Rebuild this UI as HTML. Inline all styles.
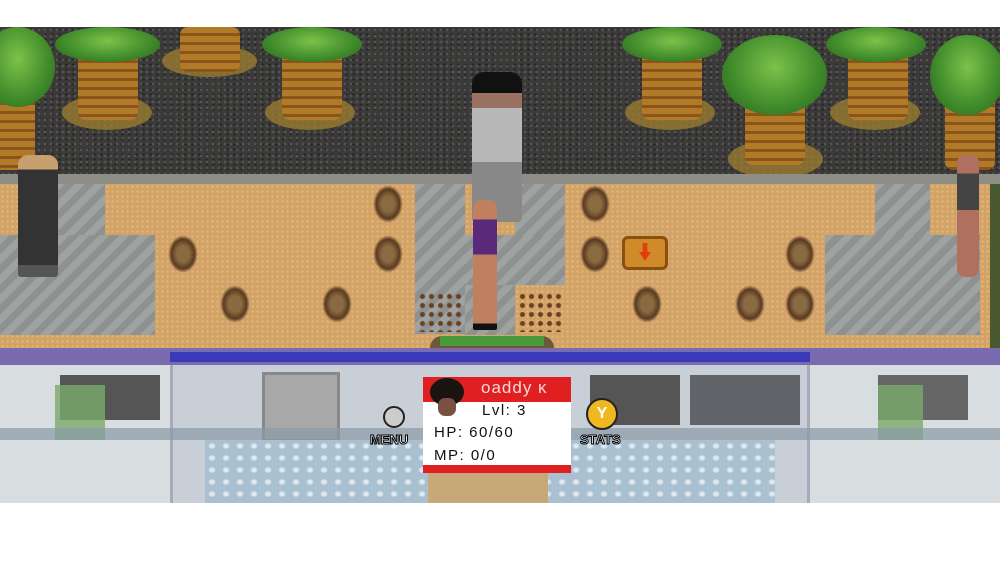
<!DOCTYPE html>
<html><head><style>
*{margin:0;padding:0;box-sizing:border-box}
body{width:1000px;height:562px;background:#fff;position:relative;overflow:hidden;font-family:"Liberation Sans",sans-serif}
.a{position:absolute}
.gravel{background:#3b3a39;background-image:radial-gradient(#555 1px,transparent 1.5px),radial-gradient(#222 1px,transparent 1.5px);background-size:6px 6px,7px 5px}
.sand{background:#d2a266;background-image:radial-gradient(#e0b67a 1px,transparent 1.5px);background-size:5px 5px}
.stone{background:#8d9290;background-image:linear-gradient(135deg,rgba(255,255,255,.15) 25%,transparent 25%,transparent 50%,rgba(255,255,255,.15) 50%,rgba(255,255,255,.15) 75%,transparent 75%);background-size:20px 20px}
.trunk{background:repeating-linear-gradient(#b27a28 0 6px,#8a5518 6px 9px);border-radius:8px}
.leaf{background:radial-gradient(ellipse at 50% 40%,#7cc24a,#3f8a2a 60%,#2c5f1e);border-radius:50%}
.base{background:#9a7a30;border-radius:50%;opacity:.8}
.plant{width:30px;height:38px;background:radial-gradient(ellipse,#8a6a40 30%,#5a3a22 55%,transparent 70%)}
</style></head><body>
<div class="a gravel" style="left:0;top:27px;width:1000px;height:151px"></div>
<!-- palms -->
<div class="a base" style="left:62px;top:95px;width:90px;height:35px"></div>
<div class="a trunk" style="left:78px;top:45px;width:60px;height:75px"></div>
<div class="a leaf" style="left:55px;top:27px;width:105px;height:35px"></div>
<div class="a base" style="left:162px;top:45px;width:95px;height:32px"></div>
<div class="a trunk" style="left:180px;top:27px;width:60px;height:45px"></div>
<div class="a base" style="left:265px;top:95px;width:90px;height:35px"></div>
<div class="a trunk" style="left:282px;top:45px;width:60px;height:75px"></div>
<div class="a leaf" style="left:262px;top:27px;width:100px;height:35px"></div>
<div class="a trunk" style="left:-10px;top:60px;width:45px;height:110px"></div>
<div class="a leaf" style="left:-20px;top:27px;width:75px;height:80px"></div>
<div class="a base" style="left:625px;top:95px;width:90px;height:35px"></div>
<div class="a trunk" style="left:642px;top:45px;width:60px;height:75px"></div>
<div class="a leaf" style="left:622px;top:27px;width:100px;height:35px"></div>
<div class="a base" style="left:728px;top:140px;width:95px;height:38px"></div>
<div class="a trunk" style="left:745px;top:80px;width:60px;height:85px"></div>
<div class="a leaf" style="left:722px;top:35px;width:105px;height:80px"></div>
<div class="a base" style="left:830px;top:95px;width:90px;height:35px"></div>
<div class="a trunk" style="left:848px;top:45px;width:60px;height:75px"></div>
<div class="a leaf" style="left:826px;top:27px;width:100px;height:35px"></div>
<div class="a trunk" style="left:945px;top:80px;width:50px;height:90px"></div>
<div class="a leaf" style="left:930px;top:35px;width:75px;height:80px"></div>
<!-- ledge -->
<div class="a" style="left:0;top:174px;width:1000px;height:10px;background:#8f8e86"></div>
<div class="a sand" style="left:0;top:184px;width:1000px;height:164px"></div>
<!-- stones -->
<div class="a stone" style="left:55px;top:184px;width:50px;height:52px"></div>
<div class="a stone" style="left:0;top:235px;width:155px;height:100px"></div>
<div class="a stone" style="left:415px;top:184px;width:50px;height:150px"></div>
<div class="a stone" style="left:465px;top:235px;width:100px;height:50px"></div>
<div class="a stone" style="left:465px;top:285px;width:50px;height:50px"></div>
<div class="a stone" style="left:515px;top:184px;width:50px;height:52px"></div>
<div class="a stone" style="left:875px;top:184px;width:55px;height:52px"></div>
<div class="a stone" style="left:825px;top:235px;width:155px;height:100px"></div>
<!-- plants -->
<div class="a plant" style="left:373px;top:185px"></div>
<div class="a plant" style="left:373px;top:235px"></div>
<div class="a plant" style="left:168px;top:235px"></div>
<div class="a plant" style="left:220px;top:285px"></div>
<div class="a plant" style="left:322px;top:285px"></div>
<div class="a plant" style="left:580px;top:185px"></div>
<div class="a plant" style="left:580px;top:235px"></div>
<div class="a plant" style="left:632px;top:285px"></div>
<div class="a plant" style="left:735px;top:285px"></div>
<div class="a plant" style="left:785px;top:235px"></div>
<div class="a plant" style="left:785px;top:285px"></div>
<div class="a" style="left:418px;top:292px;width:45px;height:40px;background:radial-gradient(#6a4020 2px,transparent 3px);background-size:9px 9px"></div>
<div class="a" style="left:518px;top:292px;width:45px;height:40px;background:radial-gradient(#6a4020 2px,transparent 3px);background-size:9px 9px"></div>
<!-- sign -->
<div class="a" style="left:622px;top:236px;width:46px;height:34px;background:#d08a2a;border:3px solid #8a5010;border-radius:6px"></div>
<div class="a" style="left:639px;top:243px;width:12px;height:18px;background:#e04010;clip-path:polygon(30% 0,70% 0,70% 50%,100% 50%,50% 100%,0 50%,30% 50%)"></div>
<!-- characters -->
<div class="a" style="left:472px;top:72px;width:50px;height:150px;background:linear-gradient(#111 0 14%,#9a7060 14% 24%,#b8b8b8 24% 60%,#888 60% 100%);border-radius:12px 12px 4px 4px"></div>
<div class="a" style="left:473px;top:200px;width:24px;height:130px;background:linear-gradient(#c08060 0 15%,#5a2a7a 15% 42%,#c08060 42% 95%,#111 95%);border-radius:8px 8px 2px 2px"></div>
<div class="a" style="left:18px;top:155px;width:40px;height:122px;background:linear-gradient(#c8a070 0 12%,#333 12% 90%,#555 90%);border-radius:10px 10px 3px 3px"></div>
<div class="a" style="left:957px;top:155px;width:22px;height:122px;background:linear-gradient(#b07060 0 15%,#444 15% 45%,#b07060 45%);border-radius:8px"></div>
<div class="a" style="left:990px;top:184px;width:10px;height:164px;background:#4a5a30"></div>
<!-- log -->
<div class="a" style="left:430px;top:336px;width:124px;height:30px;background:#6a5a3a;border-radius:12px"></div>
<div class="a" style="left:440px;top:336px;width:104px;height:10px;background:#4a9a3a"></div>
<!-- band & train -->
<div class="a" style="left:0;top:348px;width:1000px;height:17px;background:#7a6ab0"></div>
<div class="a" style="left:170px;top:352px;width:640px;height:10px;background:#3a3ab8"></div>
<div class="a" style="left:0;top:365px;width:1000px;height:138px;background:#d8dde0"></div>
<div class="a" style="left:170px;top:365px;width:640px;height:138px;background:#c8cfd6;border-left:3px solid #aab;border-right:3px solid #aab"></div>
<div class="a" style="left:60px;top:375px;width:100px;height:45px;background:#555"></div>
<div class="a" style="left:55px;top:385px;width:50px;height:55px;background:#7aaa6a;opacity:.8"></div>
<div class="a" style="left:262px;top:372px;width:78px;height:70px;background:#a8a8a8;border:3px solid #888"></div>
<div class="a" style="left:590px;top:375px;width:90px;height:50px;background:#555"></div>
<div class="a" style="left:690px;top:375px;width:110px;height:50px;background:#606468"></div>
<div class="a" style="left:878px;top:375px;width:90px;height:45px;background:#666"></div>
<div class="a" style="left:878px;top:385px;width:45px;height:55px;background:#7aaa6a;opacity:.8"></div>
<div class="a" style="left:0;top:428px;width:1000px;height:12px;background:#8a9aa6;opacity:.7"></div>
<div class="a" style="left:205px;top:440px;width:570px;height:63px;background:#a8c0d0;background-image:radial-gradient(#dfe8ee 2px,transparent 4px);background-size:14px 12px"></div>
<div class="a" style="left:428px;top:473px;width:120px;height:30px;background:#c8a878"></div>
<!-- menu/stats -->
<div class="a" style="left:383px;top:406px;width:22px;height:22px;border-radius:50%;background:#ccc;border:2px solid #222"></div>
<div class="a" style="left:370px;top:432px;font-size:13px;font-weight:bold;color:#fff;-webkit-text-stroke:1px #000">MENU</div>
<div class="a" style="left:586px;top:398px;width:32px;height:32px;border-radius:50%;background:#f0b820;border:2px solid #222;color:#fff;font-weight:bold;text-align:center;line-height:28px;font-size:16px">Y</div>
<div class="a" style="left:580px;top:432px;font-size:13px;font-weight:bold;color:#fff;-webkit-text-stroke:1px #000">STATS</div>
<!-- panel -->
<div class="a" style="left:423px;top:377px;width:148px;height:96px;background:#fff"></div>
<div class="a" style="left:423px;top:377px;width:148px;height:25px;background:#e02020"></div>
<div class="a" style="left:423px;top:465px;width:148px;height:8px;background:#e02020"></div>
<div class="a" style="left:481px;top:378px;color:#f8d8d8;font-size:17px;letter-spacing:1px">oaddy ĸ</div>
<div class="a" style="left:430px;top:378px;width:34px;height:28px;border-radius:50%;background:#1a1410"></div>
<div class="a" style="left:438px;top:398px;width:18px;height:18px;background:#7a5040;border-radius:40%"></div>
<div class="a" style="left:482px;top:402px;font-size:15px;color:#111;letter-spacing:1.5px">Lvl: 3</div>
<div class="a" style="left:434px;top:424px;font-size:15px;color:#111;letter-spacing:1.5px">HP: 60/60</div>
<div class="a" style="left:434px;top:447px;font-size:15px;color:#111;letter-spacing:1.5px">MP: 0/0</div>
</body></html>
